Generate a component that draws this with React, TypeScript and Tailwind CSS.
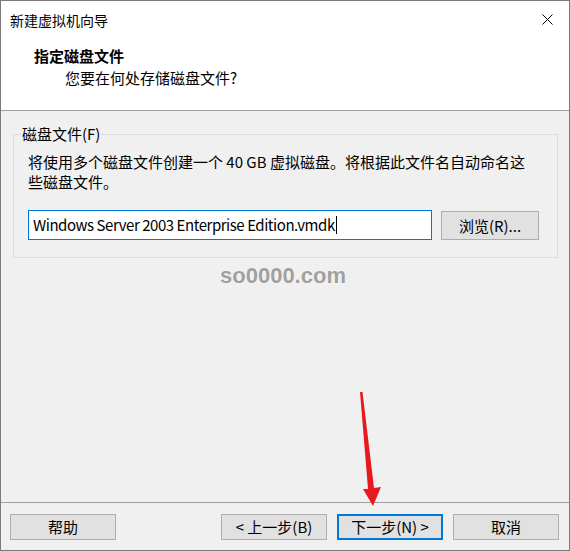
import React from "react";

const F = { fontFamily: '"Noto Sans CJK SC", "Noto Sans", sans-serif' };

function Btn({ children, primary }: { children: React.ReactNode; primary?: boolean }) {
  return (
    <div
      className={
        "w-[106px] h-[26px] flex items-center justify-center bg-[#e1e1e1] text-[15px] leading-[20px] text-black " +
        (primary ? "border-2 border-[#0078d7]" : "border border-[#adadad]")
      }
    >
      {children}
    </div>
  );
}

export default function App() {
  return (
    <div
      style={F}
      className="relative w-[570px] h-[551px] border border-[#7a7a7a] bg-[#f0f0f0] flex flex-col text-black overflow-hidden"
    >
      {/* header */}
      <div className="h-[110px] bg-white border-b border-[#a0a0a0] flex flex-col shrink-0">
        <div className="h-[38px] flex items-center justify-between pl-[9px] pr-[16px]">
          <span className="text-[14px] leading-[20px] text-black">新建虚拟机向导</span>
          <svg width="11" height="11" viewBox="0 0 11 11" className="mt-[-1px]">
            <path d="M0.5 0.5 L10.5 10.5 M10.5 0.5 L0.5 10.5" stroke="#000" strokeWidth="1" fill="none" />
          </svg>
        </div>
        <div className="pl-[33px] pt-[6px] text-[15px] leading-[22px] font-bold">指定磁盘文件</div>
        <div className="pl-[64px] text-[15px] leading-[22px]">您要在何处存储磁盘文件?</div>
      </div>

      {/* body */}
      <div className="flex-1 pt-[23px] pl-[12px]">
        <div className="relative w-[545px] h-[124px] border border-[#dcdcdc] pl-[14px] pt-[17px]">
          <span className="absolute left-[7px] top-[-12px] bg-[#f0f0f0] px-[1px] text-[15px] leading-[22px]">
            磁盘文件(F)
          </span>
          <div className="text-[15px] leading-[20px] whitespace-nowrap">
            将使用多个磁盘文件创建一个 40 GB 虚拟磁盘。将根据此文件名自动命名这
            <br />
            些磁盘文件。
          </div>
          <div className="mt-[18px] flex items-start">
            <div className="w-[404px] h-[30px] bg-white border border-[#0078d7] flex items-center pl-[4px] text-[15px] leading-[20px] tracking-[-0.45px] whitespace-nowrap">
              Windows Server 2003 Enterprise Edition.vmdk
              <span className="inline-block w-px h-[18px] bg-black ml-[1px]" />
            </div>
            <div className="ml-[9px] mt-[1px] w-[98px] h-[29px] bg-[#e1e1e1] border border-[#adadad] flex items-center justify-center text-[15px] leading-[20px]">
              浏览(R)...
            </div>
          </div>
        </div>
      </div>

      {/* footer */}
      <div className="h-[48px] shrink-0 border-t border-[#a0a0a0] pt-[11px] pl-[9px] pr-[10px] flex items-start">
        <Btn>帮助</Btn>
        <div className="flex-1" />
        <div className="flex gap-[10px]">
          <Btn>&lt; 上一步(B)</Btn>
          <Btn primary>下一步(N) &gt;</Btn>
          <Btn>取消</Btn>
        </div>
      </div>

      {/* watermark */}
      <div
        className="absolute left-[219px] top-[264px] text-[22px] leading-[22px] font-bold text-[#a0a0a0] pointer-events-none"
        style={{ fontFamily: '"Liberation Sans", Arial, sans-serif', textShadow: "0 0 1px #fff, 0 0 1px #fff" }}
      >
        so0000.com
      </div>

      {/* red arrow annotation */}
      <svg
        className="absolute left-[-1px] top-[-1px] pointer-events-none"
        width="570"
        height="551"
        viewBox="0 0 570 551"
      >
        <polygon
          points="360,392 362.5,392 374,488 381,487 373,506 363,489 368,489"
          fill="#e8181f"
        />
      </svg>
    </div>
  );
}
